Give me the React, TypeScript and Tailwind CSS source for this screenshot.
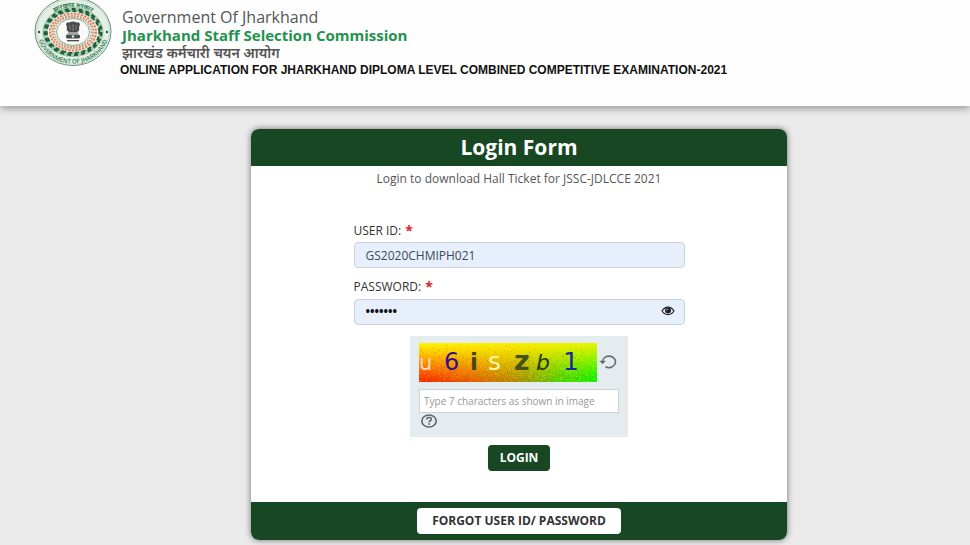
import { useState } from "react";
import type { FormEvent } from "react";

const captchaChars = [
    { char: "u", x: 0, y: 27, size: 21, fill: "#f6d9b8", weight: 400, style: "normal" },
    { char: "6", x: 25, y: 27, size: 24, fill: "#3a0f8a", weight: 400, style: "normal" },
    { char: "i", x: 51, y: 27, size: 23, fill: "#45461c", weight: 700, style: "normal" },
    { char: "s", x: 69, y: 27, size: 25, fill: "#fbf6a0", weight: 400, style: "normal" },
    { char: "z", x: 95, y: 27, size: 27, fill: "#46521a", weight: 700, style: "normal" },
    { char: "b", x: 117, y: 27, size: 22, fill: "#26380c", weight: 400, style: "italic" },
    { char: "1", x: 144, y: 27, size: 25, fill: "#152a9c", weight: 400, style: "normal" },
];

// small fixed-seed generator, keeps the speckles stable between renders
const makeSpeckles = (count: number) => {
    let seed = 7;
    const next = () => {
        seed = (seed * 16807) % 2147483647;
        return seed / 2147483647;
    };
    return Array.from({ length: count }, () => {
        const x = Math.floor(next() * 178);
        const y = Math.floor(Math.sqrt(next()) * 39);
        return { x, y, dark: next() > 0.45 };
    });
};

const speckles = makeSpeckles(1000);

const StateEmblem = () => (
    <svg viewBox="0 0 78 66" className="h-[66px] w-[78px] shrink-0" role="img" aria-label="Government of Jharkhand">
        <defs>
            <path id="ring-top" d="M8 32 A31 25 0 0 1 70 32" />
            <path id="ring-bottom" d="M3.500 32 A35.500 31.500 0 0 0 74.500 32" />
        </defs>
        <ellipse cx="39" cy="31.500" rx="38" ry="34" fill="#e3efe6" stroke="#6d8f7c" strokeWidth="1" />
        <ellipse cx="39" cy="31.500" rx="36.500" ry="32.500" fill="none" stroke="#b9d6c3" strokeWidth="0.700" />
        <ellipse cx="39" cy="32" rx="30" ry="24.500" fill="#f3f6ee" stroke="#7db08f" strokeWidth="0.800" />
        <ellipse cx="39" cy="32" rx="27.500" ry="22" fill="none" stroke="#a5cbae" strokeWidth="4" />
        <ellipse cx="39" cy="32" rx="28.300" ry="22.800" fill="none" stroke="#1f5c36" strokeWidth="2.400" strokeDasharray="4 3" />
        <ellipse cx="39" cy="32" rx="26.300" ry="20.800" fill="none" stroke="#1f5c36" strokeWidth="2" strokeDasharray="4 2.600" strokeDashoffset="2" />
        <ellipse cx="39" cy="32" rx="21.500" ry="17" fill="none" stroke="#f0dccb" strokeWidth="6" />
        <ellipse cx="39" cy="32" rx="23" ry="18.300" fill="none" stroke="#c98566" strokeWidth="1.800" strokeDasharray="2 1.500" />
        <ellipse cx="39" cy="32" rx="20.500" ry="16" fill="none" stroke="#c98566" strokeWidth="1.800" strokeDasharray="1.500 1.500" />
        <ellipse cx="39" cy="32" rx="18.300" ry="14.500" fill="none" stroke="#74925f" strokeWidth="1" strokeDasharray="1.500 1.500" />
        <ellipse cx="39" cy="32" rx="16.500" ry="13.500" fill="#f8faf7" stroke="#7b8f80" strokeWidth="0.800" />
        <g fill="#474b4a">
            <path d="M32 24 q1 -2.500 3.500 -1.500 q3.500 -2 7 0 q2.500 -1 3.500 1.500 l-1 3.500 q1 3 -2 4.500 h-8 q-3 -1.500 -2 -4.500 z" />
            <path d="M34.500 32.500 h9 l1 1 h-11 z" />
            <rect x="32" y="34.500" width="14" height="4" rx="1.500" />
            <rect x="33" y="40" width="12" height="1.300" />
        </g>
        <path d="M36 25 v5 M39 24 v7 M42 25 v5" stroke="#a5aaa7" strokeWidth="0.600" />
        <circle cx="39" cy="36.500" r="1.200" fill="#e4e8e5" />
        <circle cx="5" cy="32" r="1.200" fill="#29583a" />
        <circle cx="73" cy="32" r="1.200" fill="#29583a" />
        <text className="font-['Noto_Sans',sans-serif] text-[6px] font-bold" fill="#2f7a4c" textAnchor="middle">
            <textPath href="#ring-top" startOffset="50%">झारखण्ड सरकार</textPath>
        </text>
        <text className="font-['Open_Sans',sans-serif] text-[6px] font-semibold" fill="#2f7a4c" textAnchor="middle">
            <textPath href="#ring-bottom" startOffset="50%">GOVERNMENT OF JHARKHAND</textPath>
        </text>
    </svg>
);

const CaptchaImage = () => (
    <svg viewBox="0 0 178 39" className="h-[39px] w-[178px]" role="img" aria-label="Captcha">
        <defs>
            <linearGradient id="captcha-x" x1="0" x2="1" y1="0" y2="0">
                <stop offset="0" stopColor="#ff1a00" />
                <stop offset="0.300" stopColor="#e86000" />
                <stop offset="0.550" stopColor="#b09000" />
                <stop offset="0.800" stopColor="#50d800" />
                <stop offset="1" stopColor="#10f800" />
            </linearGradient>
            <linearGradient id="captcha-y" x1="0" x2="0.120" y1="0" y2="1">
                <stop offset="0" stopColor="#fff600" />
                <stop offset="0.250" stopColor="#fff200" stopOpacity="0.800" />
                <stop offset="1" stopColor="#fff200" stopOpacity="0" />
            </linearGradient>
        </defs>
        <rect width="178" height="39" fill="url(#captcha-x)" />
        <rect width="178" height="39" fill="url(#captcha-y)" />
        {speckles.map((dot, i) => (
            <rect
                key={i}
                x={dot.x}
                y={dot.y}
                width="1"
                height="1"
                fill={dot.dark ? "#8a6a00" : "#ffe94a"}
                opacity="0.300"
            />
        ))}
        {captchaChars.map((item) => (
            <text
                key={item.char}
                x={item.x}
                y={item.y}
                fill={item.fill}
                fontSize={item.size}
                fontWeight={item.weight}
                fontStyle={item.style}
                fontFamily="DejaVu Sans, sans-serif"
            >
                {item.char}
            </text>
        ))}
    </svg>
);

const EyeIcon = () => (
    <svg viewBox="0 0 14 10" className="h-[10px] w-[14px]" aria-hidden="true">
        <path d="M1 5 Q3.500 1.200 7 1.200 T13 5 Q10.500 8.600 7 8.600 T1 5 z" fill="#e8effc" stroke="#222" strokeWidth="1.200" />
        <circle cx="7" cy="4.500" r="3" fill="#222" />
        <path d="M5.500 4.500 q0 -1.500 1.500 -1.500" fill="none" stroke="#e8effc" strokeWidth="0.700" />
    </svg>
);

const RefreshIcon = () => (
    <svg viewBox="0 0 18 16" className="h-4 w-[18px]" aria-hidden="true">
        <path d="M3.500 8.500 A6.500 5.800 0 1 1 6.500 12.800" fill="none" stroke="#666b6e" strokeWidth="1.600" />
        <path d="M0.300 6.800 L7 6.800 L3.500 10.300 z" fill="#666b6e" />
    </svg>
);

const HelpIcon = () => (
    <svg viewBox="0 0 18 14" className="h-[14px] w-[18px]" aria-hidden="true">
        <ellipse cx="10" cy="7" rx="7.200" ry="6" fill="none" stroke="#5f6366" strokeWidth="1.600" />
        <path d="M7.800 5.600 q0 -2 2.200 -2 q2.300 0 2.300 1.700 q0 1.200 -1.300 1.700 q-0.900 0.400 -0.900 1.300" fill="none" stroke="#5f6366" strokeWidth="1.500" />
        <circle cx="10.100" cy="10" r="0.900" fill="#5f6366" />
    </svg>
);

const Required = () => <span className="text-sm leading-4 font-bold text-[#d8262c]">*</span>;

const labelClass = "flex h-6 items-end gap-1 pb-[3px] text-xs leading-4 text-[#333]";
const inputClass =
    "h-[26px] w-full rounded border border-[#c9d3df] bg-[#e8effc] px-[11px] text-xs outline-none";

export default function App() {
    const [userId, setUserId] = useState("GS2020CHMIPH021");
    const [password, setPassword] = useState("hall021");
    const [captcha, setCaptcha] = useState("");
    const [showPassword, setShowPassword] = useState(false);

    const handleSubmit = (e: FormEvent) => {
        e.preventDefault();
    };

    return (
        <div className="min-h-screen bg-[#ebebeb] font-['Open_Sans',sans-serif]">
            <header className="flex min-h-[106px] items-start bg-[#fefefe] pl-[34px] shadow-[0_2px_8px_rgba(0,0,0,0.4)]">
                <StateEmblem />
                <div className="pt-2 pl-2">
                    <div className="pl-0.5">
                        <p className="text-base leading-[18px] text-[#555]">Government Of Jharkhand</p>
                        <h1 className="text-[15px] leading-[18px] font-bold text-[#23924e]">
                            Jharkhand Staff Selection Commission
                        </h1>
                        <p className="font-['Noto_Sans',sans-serif] text-sm leading-[18px] font-semibold text-[#555]">
                            झारखंड कर्मचारी चयन आयोग
                        </p>
                    </div>
                    <p className="font-['Liberation_Sans',sans-serif] text-xs leading-4 font-bold text-[#111]">
                        ONLINE APPLICATION FOR JHARKHAND DIPLOMA LEVEL COMBINED COMPETITIVE EXAMINATION-2021
                    </p>
                </div>
            </header>

            <main className="pt-[23px] pb-1 pl-[68px]">
                <section className="mx-auto w-full max-w-[536px] overflow-hidden rounded-lg bg-white shadow-[0_0_6px_rgba(0,0,0,0.55)]">
                    <h2 className="bg-[#174823] pb-px text-center text-[21px] leading-9 font-bold text-white">
                        Login Form
                    </h2>
                    <form onSubmit={handleSubmit} className="flex flex-col items-center pt-[5px] pb-[31px]">
                        <p className="text-xs leading-4 text-[#555]">
                            Login to download Hall Ticket for JSSC-JDLCCE 2021
                        </p>
                        <div className="mt-[31px] flex w-full max-w-[331px] flex-col">
                            <label htmlFor="user-id" className={labelClass}>
                                USER ID: <Required />
                            </label>
                            <input
                                id="user-id"
                                type="text"
                                value={userId}
                                onChange={(e) => setUserId(e.target.value)}
                                className={`${inputClass} text-[#3c4858]`}
                            />
                            <label htmlFor="password" className={`${labelClass} mt-1.5`}>
                                PASSWORD: <Required />
                            </label>
                            <div className="relative">
                                <input
                                    id="password"
                                    type={showPassword ? "text" : "password"}
                                    value={password}
                                    onChange={(e) => setPassword(e.target.value)}
                                    className={`${inputClass} font-bold text-[#111]`}
                                />
                                <button
                                    type="button"
                                    aria-label="Show password"
                                    onClick={() => setShowPassword((prev) => !prev)}
                                    className="absolute inset-y-0 right-2.5 flex items-center"
                                >
                                    <EyeIcon />
                                </button>
                            </div>
                        </div>

                        <div className="mt-[11px] w-[218px] bg-[#e5ecef] px-[9px] pt-[7px] pb-[9px]">
                            <div className="flex items-center gap-0.5">
                                <CaptchaImage />
                                <button type="button" aria-label="Refresh captcha">
                                    <RefreshIcon />
                                </button>
                            </div>
                            <input
                                type="text"
                                aria-label="Captcha text"
                                placeholder="Type 7 characters as shown in image"
                                value={captcha}
                                onChange={(e) => setCaptcha(e.target.value)}
                                className="mt-[7px] block h-6 w-full border border-[#ccd3d6] bg-white px-1 text-[10px] outline-none placeholder:text-[#999]"
                            />
                            <button type="button" aria-label="Captcha help" className="mt-px block">
                                <HelpIcon />
                            </button>
                        </div>

                        <button
                            type="submit"
                            className="mt-2 h-[26px] rounded-sm bg-[#174823] px-3 text-xs font-bold text-white"
                        >
                            LOGIN
                        </button>
                    </form>
                    <footer className="flex justify-center bg-[#174823] py-1.5">
                        <button
                            type="button"
                            className="h-[26px] rounded-sm bg-white px-[15px] text-xs font-bold text-[#333]"
                        >
                            FORGOT USER ID/ PASSWORD
                        </button>
                    </footer>
                </section>
            </main>
        </div>
    );
}
